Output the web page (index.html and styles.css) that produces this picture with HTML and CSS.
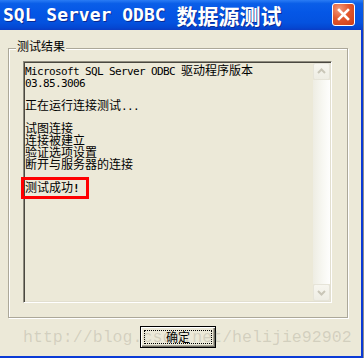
FILE: index.html
```html
<!DOCTYPE html>
<html lang="zh-CN">
<head>
    <meta charset="UTF-8">
    <title>SQL Server ODBC 数据源测试</title>
    <link rel="stylesheet" href="styles.css">
</head>
<body>
    <div class="window">
        <div class="titlebar">
            <span class="title"><span class="en">SQL Server ODBC </span><span class="zh">数据源测试</span></span>
            <div class="close">
                <svg width="21" height="21" viewBox="0 0 21 21">
                    <path d="M6 6 L15 15 M15 6 L6 15" stroke="#fff" stroke-width="2.6" stroke-linecap="square"/>
                </svg>
            </div>
        </div>

        <div class="body">
            <div class="group">
                <span class="legend">测试结果</span>
                <div class="edit">
                    <div class="text">
                        <div class="line"><span class="en">Microsoft SQL Server ODBC </span><span class="zh">驱动程序版本</span></div>
                        <div class="line"><span class="en">03.85.3006</span></div>
                        <div class="line"></div>
                        <div class="line"><span class="zh">正在运行连接测试</span><span class="en">...</span></div>
                        <div class="line"></div>
                        <div class="line"><span class="zh">试图连接</span></div>
                        <div class="line"><span class="zh">连接被建立</span></div>
                        <div class="line"><span class="zh">验证选项设置</span></div>
                        <div class="line"><span class="zh">断开与服务器的连接</span></div>
                        <div class="line"></div>
                        <div class="line"><span class="zh">测试成功</span><span class="en bang">!</span></div>
                    </div>
                    <div class="scrollbar">
                        <div class="sb-btn">
                            <svg width="15" height="15" viewBox="0 0 15 15"><polyline points="4,9 7.5,5.5 11,9" fill="none" stroke="#c9c6b8" stroke-width="2"/></svg>
                        </div>
                        <div class="sb-track"></div>
                        <div class="sb-btn">
                            <svg width="15" height="15" viewBox="0 0 15 15"><polyline points="4,6 7.5,9.5 11,6" fill="none" stroke="#c9c6b8" stroke-width="2"/></svg>
                        </div>
                    </div>
                </div>
            </div>

            <div class="actions">
                <button class="ok"><span class="focus">确定</span></button>
            </div>
        </div>

        <!-- annotation overlays -->
        <div class="watermark">http://blog.csdn.net/helijie92902</div>
        <div class="highlight"></div>
    </div>
</body>
</html>
```

FILE: styles.css
```css
html, body {
    margin: 0;
    padding: 0;
}
body {
    background: #8f8f8f;
    width: 364px;
    height: 358px;
    overflow: hidden;
}
.window {
    position: relative;
    width: 363px;
    height: 358px;
    background: #0b3bd6;
}
.titlebar {
    height: 30px;
    display: flex;
    align-items: center;
    justify-content: space-between;
    padding: 0 8px 0 3px;
    box-sizing: border-box;
    background: linear-gradient(#2a7cf4 0%, #0a5ee8 12%, #0557e6 40%, #0452df 75%, #0447d2 92%, #0a3cc4 100%);
}
.title {
    display: flex;
    align-items: center;
    color: #fff;
    font-weight: bold;
    white-space: pre;
    text-shadow: 1px 1px 0 #0a2a95;
    height: 30px;
    margin-top: -1px;
}
.title .en {
    font-family: "DejaVu Sans Mono", monospace;
    font-size: 18px;
    letter-spacing: 0;
    line-height: 22px;
}
.title .zh {
    font-family: "Noto Sans CJK SC", sans-serif;
    font-size: 21px;
    line-height: 22px;
}
.close {
    width: 21px;
    height: 21px;
    border: 1px solid #fff;
    border-radius: 3px;
    background: radial-gradient(circle at 30% 25%, #f29a7c 0%, #e2582f 45%, #cc3c15 100%);
    display: flex;
    align-items: center;
    justify-content: center;
    margin-top: -1px;
}
.body {
    width: 361px;
    height: 326px;
    background: #ece9d8;
    padding: 18px 0 0 8px;
    box-sizing: border-box;
}
.group {
    position: relative;
    width: 340px;
    height: 270px;
    box-sizing: border-box;
    border: 1px solid #aca899;
    box-shadow: inset 1px 1px 0 #fff, 1px 1px 0 #fff;
    padding: 12px 15px 14px 14px;
}
.legend {
    position: absolute;
    left: 7px;
    top: -10px;
    padding: 0 1px;
    background: #ece9d8;
    font-family: "Noto Sans CJK SC", sans-serif;
    font-size: 12px;
    line-height: 14px;
    color: #000;
}
.edit {
    display: flex;
    width: 309px;
    height: 242px;
    box-sizing: border-box;
    border: 1px solid;
    border-color: #8e8b7e #fff #fff #8e8b7e;
    box-shadow: inset 1px 1px 0 #4a4840, inset -1px -1px 0 #e2dfd0;
    padding: 1px;
}
.text {
    flex: 1;
    padding-top: 1px;
    color: #000;
}
.line {
    height: 11.7px;
    line-height: 11.7px;
    white-space: pre;
}
.line span {
    display: inline-block;
    height: 11.7px;
    line-height: 11.7px;
}
.en {
    font-family: "DejaVu Sans Mono", monospace;
    font-size: 11px;
    letter-spacing: -0.62px;
}
.zh {
    font-family: "Noto Sans CJK SC", sans-serif;
    font-size: 12px;
}
.bang {
    font-weight: bold;
}
.scrollbar {
    width: 17px;
    display: flex;
    flex-direction: column;
}
.sb-btn {
    width: 17px;
    height: 17px;
    box-sizing: border-box;
    border: 1px solid #e6e4d9;
    border-radius: 2px;
    background: linear-gradient(#f7f6ef, #eeede4);
    display: flex;
    align-items: center;
    justify-content: center;
}
.sb-track {
    flex: 1;
    background: linear-gradient(to right, #eeede3, #f8f8f3 60%, #fefefd);
}
.actions {
    display: flex;
    margin-top: 8px;
    padding-left: 132px;
}
.ok {
    width: 76px;
    height: 22px;
    padding: 3px;
    box-sizing: border-box;
    border: 1px solid #000;
    background: #ece9d8;
    box-shadow: inset 1px 1px 0 #fff, inset -1px -1px 0 #716f64, inset -2px -2px 0 #aca899;
    font-family: "Noto Sans CJK SC", sans-serif;
    font-size: 12px;
    color: #000;
    cursor: pointer;
}
.focus {
    display: flex;
    align-items: center;
    justify-content: center;
    height: 100%;
    box-sizing: border-box;
    border: 1px dotted #000;
    line-height: 12px;
}
.watermark {
    position: absolute;
    left: 23px;
    top: 329px;
    font-family: "Liberation Mono", monospace;
    font-size: 16.6px;
    line-height: 17px;
    color: rgba(120, 115, 100, 0.22);
    white-space: pre;
    pointer-events: none;
}
.highlight {
    position: absolute;
    left: 21px;
    top: 177px;
    width: 68px;
    height: 22px;
    box-sizing: border-box;
    border: 3px solid #ff0000;
    pointer-events: none;
}
```
